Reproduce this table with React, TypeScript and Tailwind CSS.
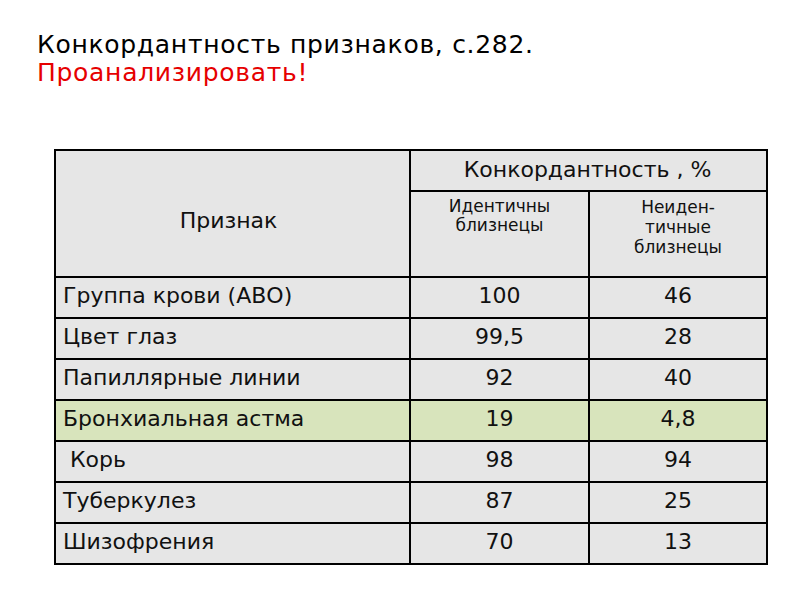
const rows = [
  { name: "Группа крови (АВО)", a: "100", b: "46" },
  { name: "Цвет глаз", a: "99,5", b: "28" },
  { name: "Папиллярные линии", a: "92", b: "40" },
  { name: "Бронхиальная астма", a: "19", b: "4,8", hl: true },
  { name: "\u00a0Корь", a: "98", b: "94" },
  { name: "Туберкулез", a: "87", b: "25" },
  { name: "Шизофрения", a: "70", b: "13" },
];

export default function App() {
  return (
    <div className="w-[800px] h-[600px] bg-white overflow-hidden font-['DejaVu_Sans',sans-serif]">
      <div className="pl-[37px] pt-[31px] text-[25px] leading-[28px] tracking-[0.7px]">
        <div className="text-black">Конкордантность признаков, с.282.</div>
        <div className="text-[#e60000]">Проанализировать!</div>
      </div>

      <table className="ml-[54px] mt-[62px] border-collapse border-2 border-black table-fixed w-[712px] text-[22px] text-[#111]">
        <colgroup>
          <col className="w-[355px]" />
          <col className="w-[179px]" />
          <col className="w-[178px]" />
        </colgroup>
        <thead>
          <tr className="h-[41px] bg-[#e6e6e6]">
            <th rowSpan={2} className="border-2 border-black font-normal text-center align-middle pt-[14px] pr-[8px]">
              Признак
            </th>
            <th colSpan={2} className="border-2 border-black font-normal text-center pb-[2px] pr-[2px]">
              Конкордантность , %
            </th>
          </tr>
          <tr className="h-[86px] bg-[#e6e6e6]">
            <th className="border-2 border-black font-normal align-top pt-[5px] text-[17px] leading-[19px]">
              Идентичны
              <br />
              близнецы
            </th>
            <th className="border-2 border-black font-normal align-top pt-[5px] text-[17px] leading-[20px]">
              Неиден-
              <br />
              тичные
              <br />
              близнецы
            </th>
          </tr>
        </thead>
        <tbody>
          {rows.map((r) => (
            <tr key={r.name} className={`h-[41px] ${r.hl ? "bg-[#d8e4bc]" : "bg-[#e6e6e6]"}`}>
              <td className="border-2 border-black pl-[7px] pb-[4px]">{r.name}</td>
              <td className="border-2 border-black text-center pb-[4px]">{r.a}</td>
              <td className="border-2 border-black text-center pb-[4px]">{r.b}</td>
            </tr>
          ))}
        </tbody>
      </table>
    </div>
  );
}
